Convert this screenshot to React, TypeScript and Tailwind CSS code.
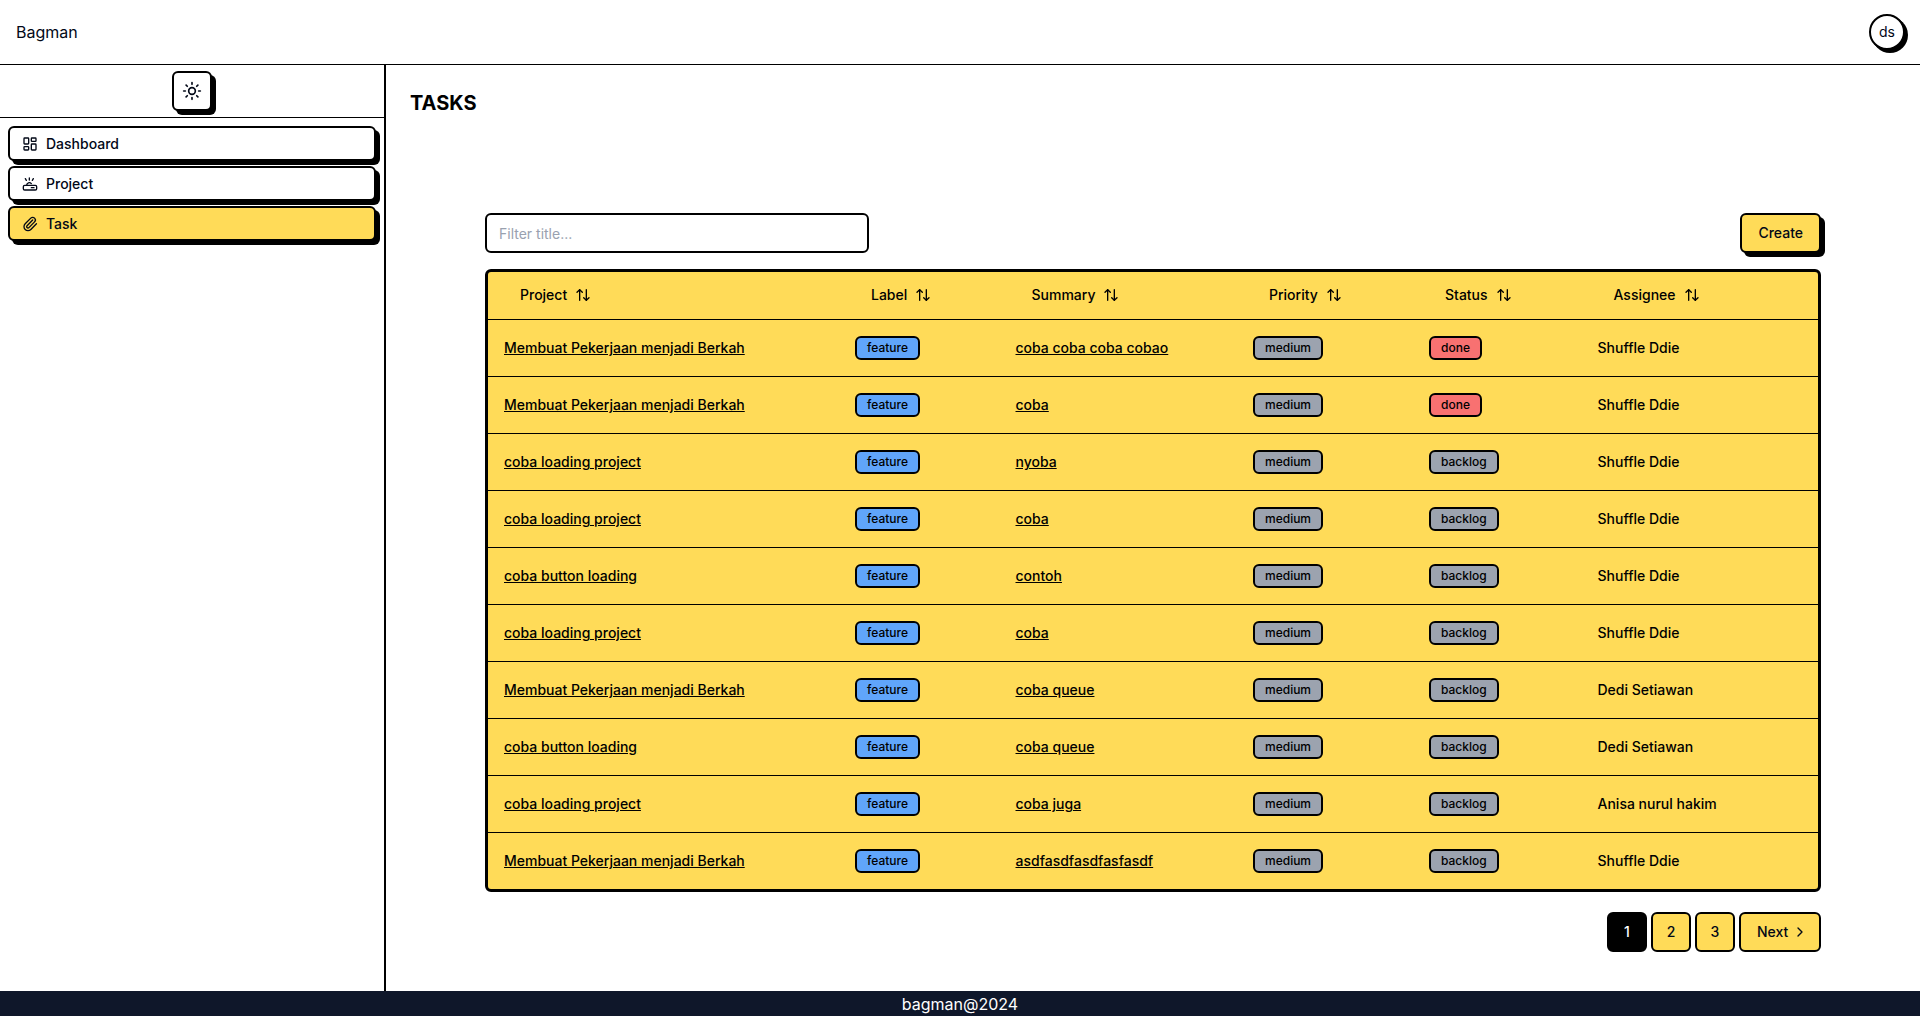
import { ArrowUpDown, ChevronRight, LayoutDashboard, Paperclip, Sun } from 'lucide-react';

const rows = [
  { project: 'Membuat Pekerjaan menjadi Berkah', summary: 'coba coba coba cobao', status: 'done', assignee: 'Shuffle Ddie' },
  { project: 'Membuat Pekerjaan menjadi Berkah', summary: 'coba', status: 'done', assignee: 'Shuffle Ddie' },
  { project: 'coba loading project', summary: 'nyoba', status: 'backlog', assignee: 'Shuffle Ddie' },
  { project: 'coba loading project', summary: 'coba', status: 'backlog', assignee: 'Shuffle Ddie' },
  { project: 'coba button loading', summary: 'contoh', status: 'backlog', assignee: 'Shuffle Ddie' },
  { project: 'coba loading project', summary: 'coba', status: 'backlog', assignee: 'Shuffle Ddie' },
  { project: 'Membuat Pekerjaan menjadi Berkah', summary: 'coba queue', status: 'backlog', assignee: 'Dedi Setiawan' },
  { project: 'coba button loading', summary: 'coba queue', status: 'backlog', assignee: 'Dedi Setiawan' },
  { project: 'coba loading project', summary: 'coba juga', status: 'backlog', assignee: 'Anisa nurul hakim' },
  { project: 'Membuat Pekerjaan menjadi Berkah', summary: 'asdfasdfasdfasfasdf', status: 'backlog', assignee: 'Shuffle Ddie' },
];

const ProjectIcon = () => (
  <svg className="w-4 h-4" viewBox="0 0 24 24" fill="none" stroke="currentColor" strokeWidth="2" strokeLinecap="round" strokeLinejoin="round">
    <rect x="2" y="14" width="20" height="7" rx="2" />
    <path d="M7 14a4 4 0 0 1 7-2.6" />
    <path d="M14 17.5h4" />
    <path d="M11 3v3M5 4l1.5 2.5M17 4l-1.5 2.5" />
  </svg>
);

const Badge = ({ text, color }: { text: string; color: string }) => (
  <span className={`inline-flex items-center rounded-md border-2 border-black px-2.5 py-0.5 text-xs font-medium ${color}`}>{text}</span>
);

const SortHead = ({ label, className }: { label: string; className: string }) => (
  <div className={`flex items-center gap-2 text-sm font-medium pl-4 ${className}`}>
    {label}
    <ArrowUpDown className="w-4 h-4" />
  </div>
);

const NavItem = ({ icon, label, active }: { icon: React.ReactNode; label: string; active?: boolean }) => (
  <a className={`flex items-center gap-2 h-[35px] px-3 rounded-md border-2 border-black shadow-[4px_4px_0_0_#000] text-sm font-medium ${active ? 'bg-[#ffdb58]' : 'bg-white'}`}>
    {icon}
    {label}
  </a>
);

export default function App() {
  return (
    <div className="min-h-[1016px] h-[1016px] flex flex-col bg-white text-[#020817] font-['Inter',sans-serif]">
      <header className="h-[65px] shrink-0 flex items-center justify-between pl-4 pr-3 border-b border-black">
        <span className="text-base">Bagman</span>
        <div className="w-9 h-9 mr-[3px] rounded-full border-2 border-black bg-white shadow-[3px_3px_0_0_#000] flex items-center justify-center text-sm">ds</div>
      </header>

      <div className="flex-1 flex min-h-0">
        <aside className="w-[386px] shrink-0 border-r-2 border-black">
          <div className="h-[53px] flex justify-center items-center border-b border-black">
            <button className="w-10 h-10 rounded-md border-2 border-black bg-white shadow-[4px_4px_0_0_#000] flex items-center justify-center">
              <Sun className="w-5 h-5" />
            </button>
          </div>
          <nav className="flex flex-col gap-[5px] pt-2 px-2">
            <NavItem icon={<LayoutDashboard className="w-4 h-4" />} label="Dashboard" />
            <NavItem icon={<ProjectIcon />} label="Project" />
            <NavItem icon={<Paperclip className="w-4 h-4" />} label="Task" active />
          </nav>
        </aside>

        <main className="flex-1 min-w-0 pl-6 pt-6">
          <h1 className="text-xl font-bold leading-7 text-black">TASKS</h1>
          <div className="ml-[75px] mr-[99px] mt-[96px]">
            <div className="flex items-center justify-between">
              <input
                placeholder="Filter title..."
                className="w-[384px] h-10 rounded-md border-2 border-black px-3 text-sm outline-none placeholder:text-gray-400"
              />
              <button className="h-10 px-4 rounded-md border-2 border-black bg-[#ffdb58] shadow-[4px_4px_0_0_#000] text-sm font-medium">Create</button>
            </div>

            <div className="mt-4 rounded-md border-[3px] border-black bg-[#ffdb58] text-black overflow-hidden">
              <div className="h-[48px] pb-0.5 flex items-center border-b border-black">
                <SortHead label="Project" className="w-[351px] ml-4" />
                <SortHead label="Label" className="w-[160.5px]" />
                <SortHead label="Summary" className="w-[237.5px]" />
                <SortHead label="Priority" className="w-[176px]" />
                <SortHead label="Status" className="w-[168.5px]" />
                <SortHead label="Assignee" className="w-[200px]" />
              </div>
              {rows.map((row, i) => (
                <div key={i} className={`flex items-center pl-4 text-sm font-medium ${i < rows.length - 1 ? 'h-[57px] border-b border-black' : 'h-[56px]'}`}>
                  <a className="w-[351px] underline">{row.project}</a>
                  <div className="w-[160.5px]"><Badge text="feature" color="bg-[#60a5fa]" /></div>
                  <a className="w-[237.5px] underline">{row.summary}</a>
                  <div className="w-[176px]"><Badge text="medium" color="bg-[#9ca3af]" /></div>
                  <div className="w-[168.5px]">
                    <Badge text={row.status} color={row.status === 'done' ? 'bg-[#f87171]' : 'bg-[#9ca3af]'} />
                  </div>
                  <span>{row.assignee}</span>
                </div>
              ))}
            </div>

            <div className="mt-5 flex justify-end gap-1 text-sm font-medium">
              <button className="w-10 h-10 rounded-md border-2 border-black bg-black text-white">1</button>
              <button className="w-10 h-10 rounded-md border-2 border-black bg-[#ffdb58]">2</button>
              <button className="w-10 h-10 rounded-md border-2 border-black bg-[#ffdb58]">3</button>
              <button className="w-[82px] h-10 pl-4 flex items-center gap-1 rounded-md border-2 border-black bg-[#ffdb58]">
                Next
                <ChevronRight className="w-4 h-4" />
              </button>
            </div>
          </div>
        </main>
      </div>

      <footer className="h-[25px] shrink-0 bg-[#0f172a] text-white text-base leading-[26px] text-center">bagman@2024</footer>
    </div>
  );
}
